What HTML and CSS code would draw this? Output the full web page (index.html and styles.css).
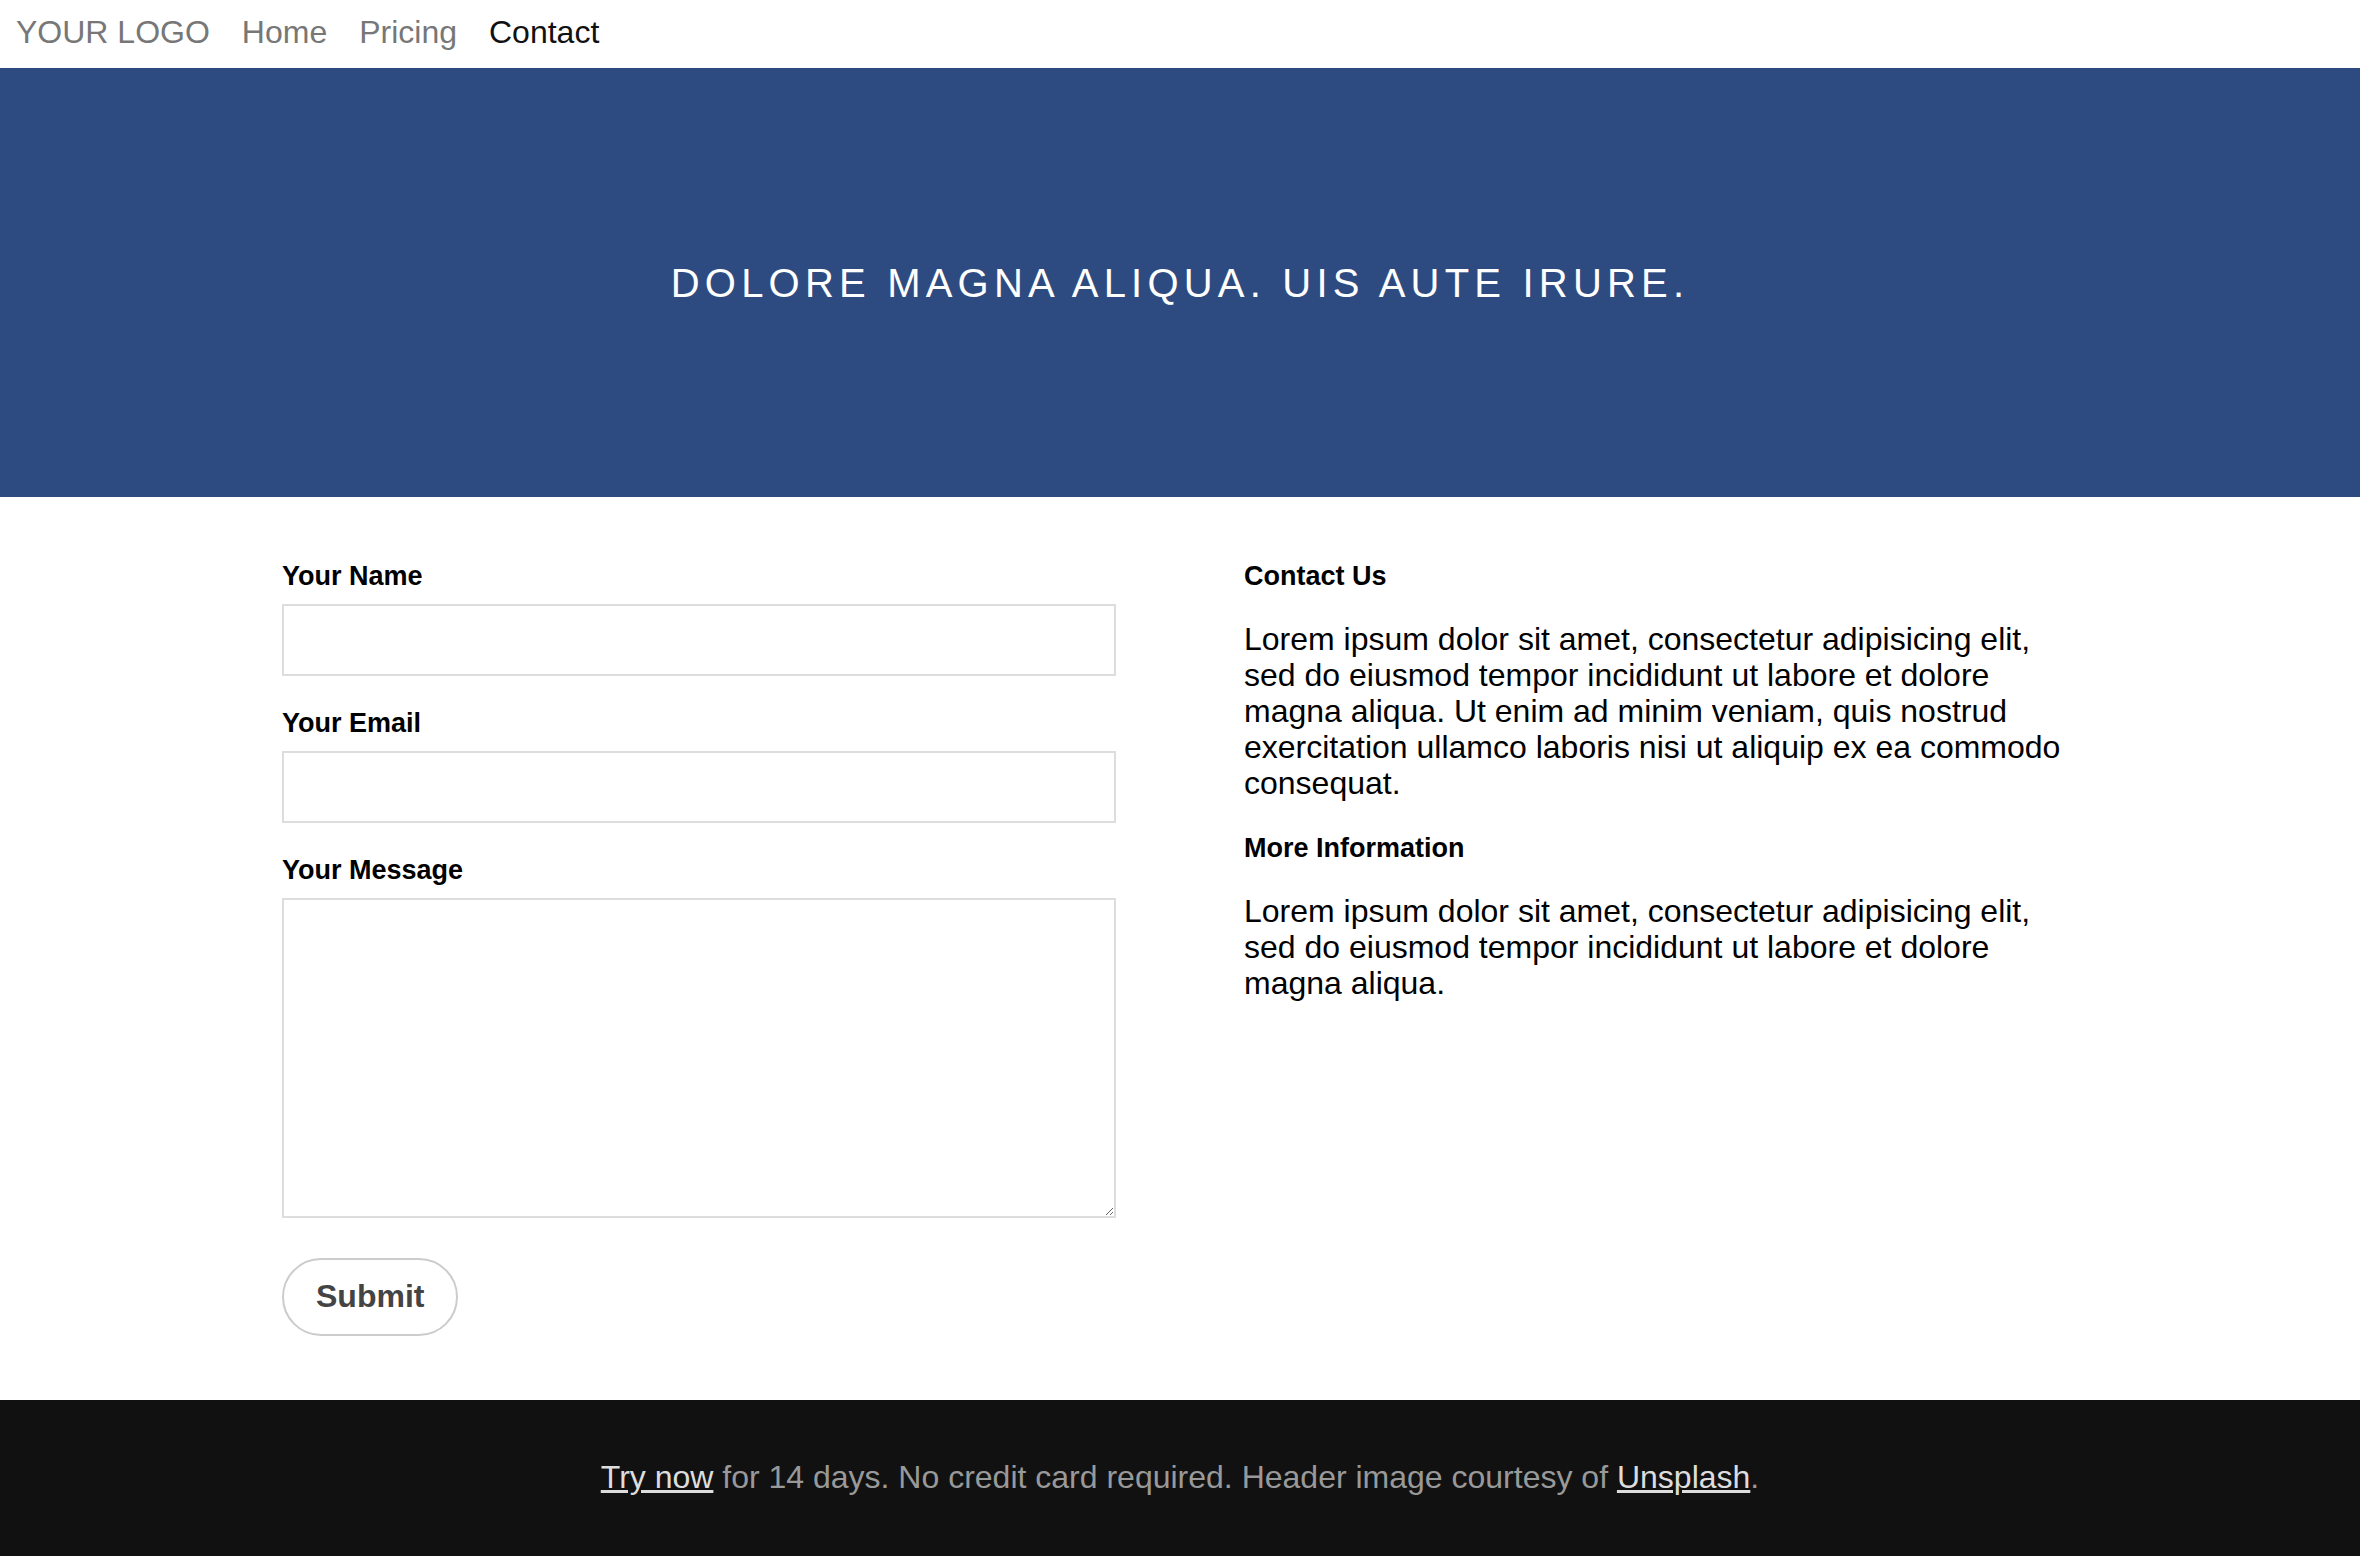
FILE: index.html
```html
<!DOCTYPE html>
<html lang="en">
<head>
<meta charset="utf-8">
<title>Contact</title>
<link rel="stylesheet" href="styles.css">
</head>
<body>
<nav class="nav">
  <a class="nav-link" href="#">YOUR LOGO</a>
  <a class="nav-link" href="#">Home</a>
  <a class="nav-link" href="#">Pricing</a>
  <a class="nav-link nav-link-active" href="#">Contact</a>
</nav>
<header class="hero">
  <h1 class="hero-title">Dolore magna aliqua. Uis aute irure.</h1>
</header>
<main class="content">
  <div class="container">
    <form class="form">
      <div class="field">
        <label class="label" for="name">Your Name</label>
        <input class="input" id="name" type="text">
      </div>
      <div class="field">
        <label class="label" for="email">Your Email</label>
        <input class="input" id="email" type="email">
      </div>
      <div class="field field-last">
        <label class="label" for="message">Your Message</label>
        <textarea class="textarea" id="message"></textarea>
      </div>
      <button class="button" type="button">Submit</button>
    </form>
    <div class="info">
      <h3 class="info-title">Contact Us</h3>
      <p class="info-text">Lorem ipsum dolor sit amet, consectetur adipisicing elit, sed do eiusmod tempor incididunt ut labore et dolore magna aliqua. Ut enim ad minim veniam, quis nostrud exercitation ullamco laboris nisi ut aliquip ex ea commodo consequat.</p>
      <h3 class="info-title">More Information</h3>
      <p class="info-text">Lorem ipsum dolor sit amet, consectetur adipisicing elit, sed do eiusmod tempor incididunt ut labore et dolore magna aliqua.</p>
    </div>
  </div>
</main>
<footer class="footer">
  <a class="footer-link" href="#">Try now</a> for 14 days. No credit card required. Header image courtesy of <a class="footer-link" href="#">Unsplash</a>.
</footer>
</body>
</html>
```
FILE: styles.css
```css
* {
  box-sizing: border-box;
}

html, body {
  margin: 0;
  padding: 0;
}

body {
  font-family: "Liberation Sans", Arial, Helvetica, sans-serif;
  color: #000;
  background: #fff;
}

.nav {
  display: flex;
  padding: 14px 0 17px;
  font-size: 32px;
  line-height: 37px;
}

.nav-link {
  padding: 0 16px;
  color: #777;
  text-decoration: none;
}

.nav-link-active {
  color: #111;
}

.hero {
  height: 429px;
  background: #2d4b81;
  display: flex;
  align-items: center;
  justify-content: center;
}

.hero-title {
  margin: 0;
  color: #fff;
  font-size: 40px;
  font-weight: 400;
  line-height: 46px;
  letter-spacing: 5.2px;
  text-transform: uppercase;
}

.content {
  padding: 64px 0;
}

.container {
  width: 1796px;
  margin: 0 auto;
  display: grid;
  grid-template-columns: 834px 834px;
  column-gap: 128px;
  align-items: start;
}

.form {
  margin: 0;
}

.field {
  margin-bottom: 32px;
}

.field-last {
  margin-bottom: 40px;
}

.label {
  display: block;
  font-size: 27px;
  font-weight: 700;
  line-height: 30px;
  margin-bottom: 13px;
}

.input {
  display: block;
  width: 100%;
  height: 72px;
  margin: 0;
  padding: 0 16px;
  border: 2px solid #ddd;
  border-radius: 0;
  background: #fff;
  font-family: inherit;
  font-size: 32px;
  outline: none;
}

.textarea {
  display: block;
  width: 100%;
  height: 320px;
  margin: 0;
  padding: 16px;
  border: 2px solid #ddd;
  border-radius: 0;
  background: #fff;
  font-family: inherit;
  font-size: 32px;
  outline: none;
}

.button {
  display: block;
  margin: 0;
  padding: 18px 32px 19px;
  border: 2px solid #ccc;
  border-radius: 40px;
  background: #fff;
  color: #444;
  font-family: inherit;
  font-size: 32px;
  font-weight: 700;
  line-height: 37px;
}

.info-title {
  margin: 0 0 30px;
  font-size: 27px;
  font-weight: 700;
  line-height: 30px;
}

.info-text {
  margin: 0 0 32px;
  font-size: 32px;
  line-height: 36px;
}

.footer {
  background: #111;
  color: #999;
  text-align: center;
  font-size: 32px;
  line-height: 37px;
  padding: 59px 0 60px;
}

.footer-link {
  color: #ddd;
  text-decoration: underline;
}
```
